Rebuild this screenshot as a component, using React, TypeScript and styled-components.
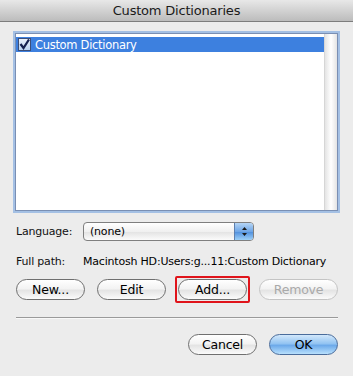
import React from "react";
import styled, { createGlobalStyle } from "styled-components";

const Global = createGlobalStyle`
  html, body { margin: 0; padding: 0; }
  body {
    width: 353px;
    height: 376px;
    overflow: hidden;
    background: #ececec;
    font-family: "DejaVu Sans", "Liberation Sans", sans-serif;
    font-size: 11px;
    letter-spacing: -0.2px;
    color: #000;
  }
`;

const Window = styled.div`
  width: 353px;
  height: 376px;
  display: flex;
  flex-direction: column;
  background: #ececec;
`;

const TitleBar = styled.div`
  height: 21px;
  display: flex;
  align-items: center;
  justify-content: center;
  font-size: 13px;
  color: #1a1a1a;
  background: linear-gradient(#e8e8e8, #bcbcbc);
  border-bottom: 1px solid #7d7d7d;
`;

const Body = styled.div`
  display: flex;
  flex-direction: column;
  padding: 11px 15px 0 16px;
`;

const ListBox = styled.div`
  height: 176px;
  background: #fff;
  border: 1px solid #7a8fb3;
  box-shadow: 0 0 0 2px #a4c0e4;
  display: flex;
  margin-left: -1px;
`;

const Rows = styled.div`
  flex: 1;
  padding-top: 3px;
`;

const Row = styled.div<{ selected?: boolean }>`
  height: 15px;
  display: flex;
  align-items: center;
  gap: 4px;
  padding-left: 2px;
  font-size: 11.5px;
  letter-spacing: -0.3px;
  color: ${(p) => (p.selected ? "#fff" : "#000")};
  background: ${(p) => (p.selected ? "#3d80df" : "transparent")};
`;

const Check = styled.span`
  width: 11px;
  height: 11px;
  background: linear-gradient(#e9f1fb, #b9d2ef);
  border: 1px solid #3c4f7a;
  display: flex;
  align-items: center;
  justify-content: center;
`;

const Scroll = styled.div`
  width: 12px;
  background: linear-gradient(90deg, #e4e4e4, #ffffff 50%, #e4e4e4);
  border-left: 1px solid #d6d6d6;
`;

const FieldRow = styled.div<{ top: number }>`
  display: flex;
  align-items: center;
  margin-top: ${(p) => p.top}px;
`;

const Label = styled.span`
  width: 67px;
  color: #111;
`;

const Popup = styled.div`
  width: 171px;
  height: 19px;
  border: 1px solid #7f7f7f;
  border-radius: 4px;
  background: linear-gradient(#ffffff, #f0f0f0 50%, #e2e2e2 51%, #fbfbfb);
  display: flex;
  align-items: center;
  padding-left: 6px;
  box-sizing: border-box;
`;

const PopupText = styled.span`
  flex: 1;
`;

const Stepper = styled.div`
  width: 18px;
  height: 17px;
  border-radius: 0 3px 3px 0;
  background: linear-gradient(#b5d5f5, #6fa6e6 50%, #4d8ddc 51%, #9dd0f8);
  border-left: 1px solid #5d7fae;
  display: flex;
  align-items: center;
  justify-content: center;
`;

const ButtonRow = styled.div<{ top: number; end?: boolean }>`
  display: flex;
  gap: 12px;
  justify-content: ${(p) => (p.end ? "flex-end" : "flex-start")};
  margin-top: ${(p) => p.top}px;
`;

const Button = styled.div<{ w: number; disabled?: boolean; primary?: boolean }>`
  width: ${(p) => p.w}px;
  height: 21px;
  box-sizing: border-box;
  border-radius: 11px;
  border: 1px solid ${(p) => (p.disabled ? "#c4c4c4" : p.primary ? "#4a6c9b" : "#6f6f6f")};
  background: ${(p) =>
    p.primary
      ? "linear-gradient(#d3e8fb, #93c4f2 45%, #6daaea 55%, #b8e0fd)"
      : "linear-gradient(#ffffff, #f3f3f3 45%, #e4e4e4 55%, #fbfbfb)"};
  color: ${(p) => (p.disabled ? "#a9a9a9" : "#000")};
  font-size: 12.5px;
  display: flex;
  align-items: center;
  justify-content: center;
  position: relative;
`;

const Highlight = styled.div`
  position: absolute;
  left: -4px;
  top: -4px;
  right: -4px;
  bottom: -4px;
  border: 2px solid #e0141b;
  border-radius: 2px;
`;

const Separator = styled.div`
  height: 1px;
  background: #9a9a9a;
  margin-top: 17px;
  border-bottom: 1px solid #f8f8f8;
`;

export default function App() {
  return (
    <Window>
      <Global />
      <TitleBar>Custom Dictionaries</TitleBar>
      <Body>
        <ListBox>
          <Rows>
            <Row selected>
              <Check>
                <svg width="11" height="11" viewBox="0 0 11 11">
                  <path d="M1.5 5 L4.5 9 L10 0.5" stroke="#14204f" strokeWidth="2.2" fill="none" />
                </svg>
              </Check>
              Custom Dictionary
            </Row>
          </Rows>
          <Scroll />
        </ListBox>
        <FieldRow top={11}>
          <Label>Language:</Label>
          <Popup>
            <PopupText>(none)</PopupText>
            <Stepper>
              <svg width="7" height="11" viewBox="0 0 7 11">
                <path d="M3.5 1 L6 4 L1 4 Z M3.5 10 L6 7 L1 7 Z" fill="#1a1a1a" />
              </svg>
            </Stepper>
          </Popup>
        </FieldRow>
        <FieldRow top={14}>
          <Label>Full path:</Label>
          <span>Macintosh HD:Users:g...11:Custom Dictionary</span>
        </FieldRow>
        <ButtonRow top={11}>
          <Button w={69}>New...</Button>
          <Button w={69}>Edit</Button>
          <Button w={69}>
            Add...
            <Highlight />
          </Button>
          <Button w={79} disabled>
            Remove
          </Button>
        </ButtonRow>
        <Separator />
        <ButtonRow top={15} end>
          <Button w={69}>Cancel</Button>
          <Button w={69} primary>
            OK
          </Button>
        </ButtonRow>
      </Body>
    </Window>
  );
}
